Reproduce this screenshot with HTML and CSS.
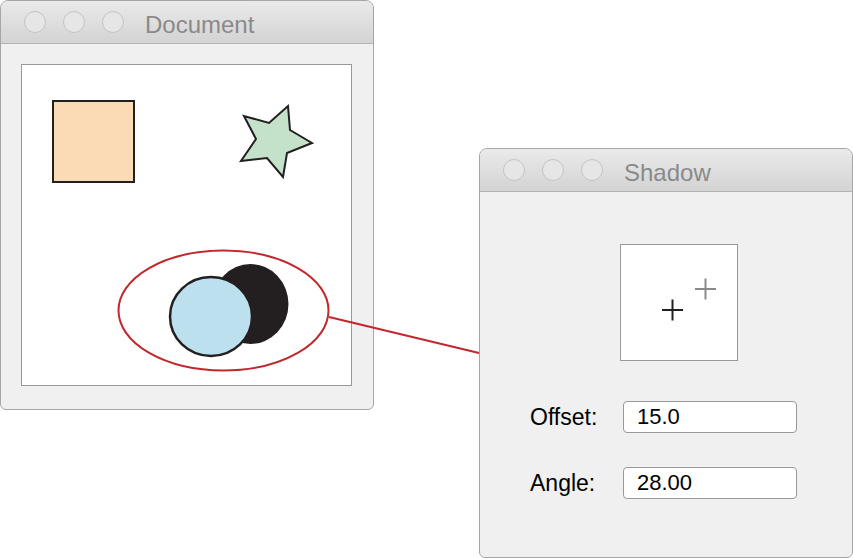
FILE: index.html
```html
<!DOCTYPE html>
<html lang="en">
<head>
    <meta charset="UTF-8">
    <meta name="viewport" content="width=device-width, initial-scale=1.0">
    <title>Shadow Dialog</title>
    <link rel="stylesheet" href="styles.css">
</head>
<body>

<div class="desktop">

    <div class="window doc-window">
        <div class="titlebar">
            <div class="lights">
                <span class="light"></span>
                <span class="light"></span>
                <span class="light"></span>
            </div>
            <div class="title">Document</div>
        </div>
        <div class="window-body">
            <div class="canvas">
                <!-- viewBox uses page coordinates so shapes line up with the callout -->
                <svg width="329" height="320" viewBox="22 65 329 320">
                    <rect x="53" y="101" width="81" height="81" fill="#fbdab6" stroke="#231f20" stroke-width="2"/>
                    <polygon points="288,106 290,130 312,143 287,153 283,177 267,158 241,161 256,139 244,116 269,123"
                             fill="#c4e2c9" stroke="#231f20" stroke-width="2" stroke-linejoin="miter"/>
                    <ellipse cx="250.5" cy="304" rx="38" ry="40" fill="#231f20"/>
                    <ellipse cx="211" cy="316.5" rx="41" ry="39.5" fill="#bde0ee" stroke="#231f20" stroke-width="2.5"/>
                </svg>
            </div>
        </div>
    </div>

    <div class="window shadow-window">
        <div class="titlebar">
            <div class="lights">
                <span class="light"></span>
                <span class="light"></span>
                <span class="light"></span>
            </div>
            <div class="title">Shadow</div>
        </div>
        <div class="window-body dialog">
            <div class="preview">
                <svg width="116" height="115" viewBox="0 0 116 115">
                    <path d="M74 44 H95 M84.5 33.5 V54.5" stroke="#8a8a8a" stroke-width="2"/>
                    <path d="M41 65 H62 M51.5 54.5 V75.5" stroke="#231f20" stroke-width="2"/>
                </svg>
            </div>
            <div class="form">
                <label for="offset">Offset:</label>
                <input id="offset" type="text" value="15.0">
                <label for="angle">Angle:</label>
                <input id="angle" type="text" value="28.00">
            </div>
        </div>
    </div>

    <!-- callout from the selected shape to the dialog -->
    <svg class="callout" width="853" height="558" viewBox="0 0 853 558">
        <ellipse cx="223.5" cy="310.5" rx="105" ry="60" fill="none" stroke="#c1272d" stroke-width="2"/>
        <line x1="329" y1="317" x2="479" y2="353" stroke="#c1272d" stroke-width="2"/>
    </svg>

</div>

</body>
</html>
```

FILE: styles.css
```css
body {
    margin: 0;
    background-color: #fff;
    font-family: "Liberation Sans", Arial, sans-serif;
}
.desktop {
    position: relative;
    width: 853px;
    height: 558px;
    overflow: hidden;
}
.window {
    position: absolute;
    width: 374px;
    height: 410px;
    box-sizing: border-box;
    border: 1px solid #a6a6a6;
    border-radius: 8px 8px 6px 6px;
    background-color: #f0f0f0;
    overflow: hidden;
}
.doc-window {
    left: 0;
    top: 0;
}
.shadow-window {
    left: 479px;
    top: 148px;
}
.titlebar {
    display: flex;
    align-items: center;
    height: 42px;
    padding-left: 23px;
    border-bottom: 1px solid #b3b3b3;
    background: linear-gradient(#eaeaea, #d3d3d3);
}
.lights {
    display: flex;
    gap: 17px;
}
.light {
    width: 20px;
    height: 20px;
    border-radius: 50%;
    background-color: #e6e6e6;
    border: 1px solid #c4c4c4;
}
.title {
    margin-left: 21px;
    padding-top: 6px;
    font-size: 24px;
    color: #8a8a8a;
}
.window-body {
    padding: 20px;
}
.canvas {
    width: 331px;
    height: 322px;
    box-sizing: border-box;
    border: 1px solid #999;
    background-color: #fff;
}
.canvas svg {
    display: block;
}
.dialog {
    padding: 52px 0 0 0;
}
.preview {
    width: 118px;
    height: 117px;
    box-sizing: border-box;
    margin-left: 140px;
    border: 1px solid #999;
    background-color: #fff;
}
.preview svg {
    display: block;
}
.form {
    display: grid;
    grid-template-columns: 93px 174px;
    row-gap: 34px;
    align-items: center;
    margin-top: 40px;
    padding-left: 50px;
}
label {
    font-size: 23px;
    color: #000;
}
input {
    height: 32px;
    box-sizing: border-box;
    padding: 0 13px;
    border: 1px solid #999;
    border-radius: 4px;
    background-color: #fff;
    font-family: inherit;
    font-size: 22px;
    color: #000;
}
.callout {
    position: absolute;
    left: 0;
    top: 0;
    pointer-events: none;
}
```
